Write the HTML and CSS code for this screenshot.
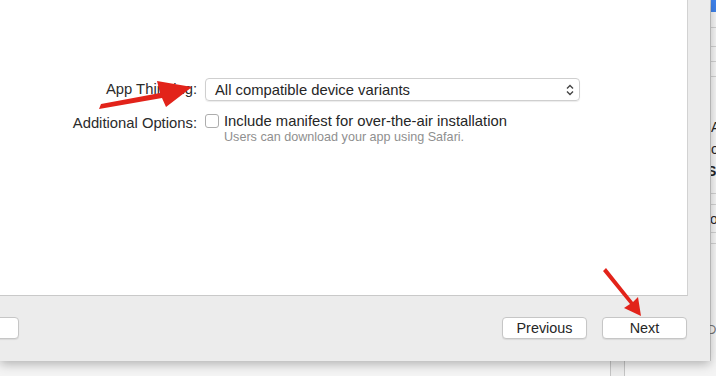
FILE: index.html
```html
<!DOCTYPE html>
<html lang="en">
<head>
  <meta charset="UTF-8" />
  <title>Export Options</title>
  <link rel="stylesheet" href="styles.css">
</head>
<body>
  <div class="desktop">
    <div class="sheet">
      <div class="content">
        <div class="form">
          <label class="form-label" for="thinning">App Thinning:</label>
          <div class="popup" id="thinning">
            <span>All compatible device variants</span>
            <svg class="chevrons" viewBox="0 0 10 14">
              <path d="M2 5.5 L5 2.5 L8 5.5 M2 8.5 L5 11.5 L8 8.5"/>
            </svg>
          </div>

          <span class="form-label">Additional Options:</span>
          <div class="option">
            <label class="check-row">
              <span class="checkbox"></span>
              <span>Include manifest for over-the-air installation</span>
            </label>
            <p class="hint">Users can download your app using Safari.</p>
          </div>
        </div>
      </div>
      <div class="footer">
        <button class="btn btn-cut"></button>
        <div class="footer-right">
          <button class="btn">Previous</button>
          <button class="btn">Next</button>
        </div>
      </div>
    </div>

    <div class="behind">
      <div class="behind-bar"></div>
      <div class="behind-row"></div>
      <div class="behind-row r2"></div>
      <div class="behind-row r3"></div>
      <div class="behind-row r3"></div>
      <div class="behind-row tall">
        <span class="frag">.A</span>
        <span class="frag">.o</span>
        <span class="frag bold">S</span>
      </div>
      <div class="behind-row r4"></div>
      <div class="behind-row r5"><span class="frag">lo</span></div>
      <div class="behind-row r4"></div>
    </div>

    <div class="below">
      <div class="below-split"></div>
    </div>
    <span class="frag-do">Do</span>

    <!-- annotation arrows -->
    <svg class="arrow" viewBox="0 0 716 376">
      <path d="M99 109 L101 104 L160 93 L157 81 L192 87 L166 107 L162 98 Z"/>
    </svg>
    <svg class="arrow" viewBox="0 0 716 376">
      <path d="M603 271 L606 268 L633 302 L638 297 L641 316 L624 308 L630 304 Z"/>
    </svg>
  </div>
</body>
</html>
```

FILE: styles.css
```css
body {
  margin: 0;
  font-family: "Liberation Sans", Arial, sans-serif;
  font-size: 14.8px;
  color: #262626;
  background: #f4f4f4;
  overflow: hidden;
}

.desktop {
  position: relative;
  width: 716px;
  height: 376px;
  display: grid;
  grid-template-columns: 710px 6px;
  grid-template-rows: 361px 15px;
}

.sheet {
  position: relative;
  z-index: 2;
  background: #ececec;
  box-shadow: 0 3px 10px rgba(0,0,0,0.28);
  display: flex;
  flex-direction: column;
}

.content {
  width: 687px;
  height: 295px;
  background: #fff;
  border-right: 1px solid #d2d2d2;
  border-bottom: 1px solid #c9c9c9;
  box-sizing: content-box;
}

.form {
  display: grid;
  grid-template-columns: 197px 375px;
  column-gap: 8px;
  row-gap: 11px;
  padding-top: 78px;
}

.form-label {
  text-align: right;
  line-height: 23px;
  color: #2b2b2b;
}

.option .form-label,
.form-label:nth-of-type(2) {
  line-height: 17px;
}

.popup {
  height: 21px;
  border: 1px solid #cfcfcf;
  border-radius: 4px;
  box-shadow: 0 1px 1px rgba(0,0,0,0.08);
  display: flex;
  align-items: center;
  justify-content: space-between;
  padding: 0 4px 0 9px;
}

.chevrons {
  width: 10px;
  height: 14px;
  fill: none;
  stroke: #444;
  stroke-width: 1.4;
}

.option {
  display: flex;
  flex-direction: column;
}

.check-row {
  display: flex;
  align-items: center;
  gap: 5px;
  height: 17px;
}

.checkbox {
  width: 12px;
  height: 12px;
  border: 1px solid #adadad;
  border-radius: 3px;
  background: #fff;
}

.hint {
  margin: 1px 0 0 19px;
  font-size: 12.6px;
  color: #8f8f8f;
}

.footer {
  flex: 1;
  display: flex;
  align-items: flex-start;
  justify-content: space-between;
  padding: 21px 23px 0 0;
}

.footer-right {
  display: flex;
  gap: 15px;
}

.btn {
  height: 22px;
  width: 85px;
  font-family: inherit;
  font-size: 14.4px;
  color: #262626;
  background: #fff;
  border: 1px solid #c6c6c6;
  border-radius: 4px;
  box-shadow: 0 1px 1px rgba(0,0,0,0.08);
  padding: 0;
}

.btn-cut {
  margin-left: -66px;
}

.behind {
  background: #f5f5f5;
  border-left: 1px solid #cfcfcf;
  display: flex;
  flex-direction: column;
  overflow: hidden;
}

.behind-bar {
  height: 12px;
  background: #3f82ea;
}

.behind-row {
  height: 15px;
  border-bottom: 1px solid #d0d0d0;
}

.behind-row.r2 {
  height: 18px;
}

.behind-row.r3 {
  height: 14px;
}

.behind-row.r4 {
  height: 10px;
}

.behind-row.r5 {
  height: 27px;
  display: flex;
  align-items: center;
}

.behind-row.tall {
  height: 117px;
  padding-top: 41px;
  box-sizing: border-box;
  display: flex;
  flex-direction: column;
  gap: 4px;
}

.frag {
  margin-left: -4px;
  font-size: 14px;
  line-height: 18px;
  white-space: nowrap;
}

.bold {
  font-weight: bold;
}

.below {
  grid-column: 1 / 3;
  display: flex;
  padding-left: 610px;
}

.below-split {
  width: 13px;
  background: #ececec;
  border-left: 1px solid #c4c4c4;
  border-right: 1px solid #c4c4c4;
}

.frag-do {
  position: absolute;
  left: 707px;
  top: 322px;
  font-size: 13px;
  color: #777;
  z-index: 1;
}

.arrow {
  position: absolute;
  left: 0;
  top: 0;
  width: 716px;
  height: 376px;
  z-index: 5;
  fill: #e2231a;
  pointer-events: none;
}
```
